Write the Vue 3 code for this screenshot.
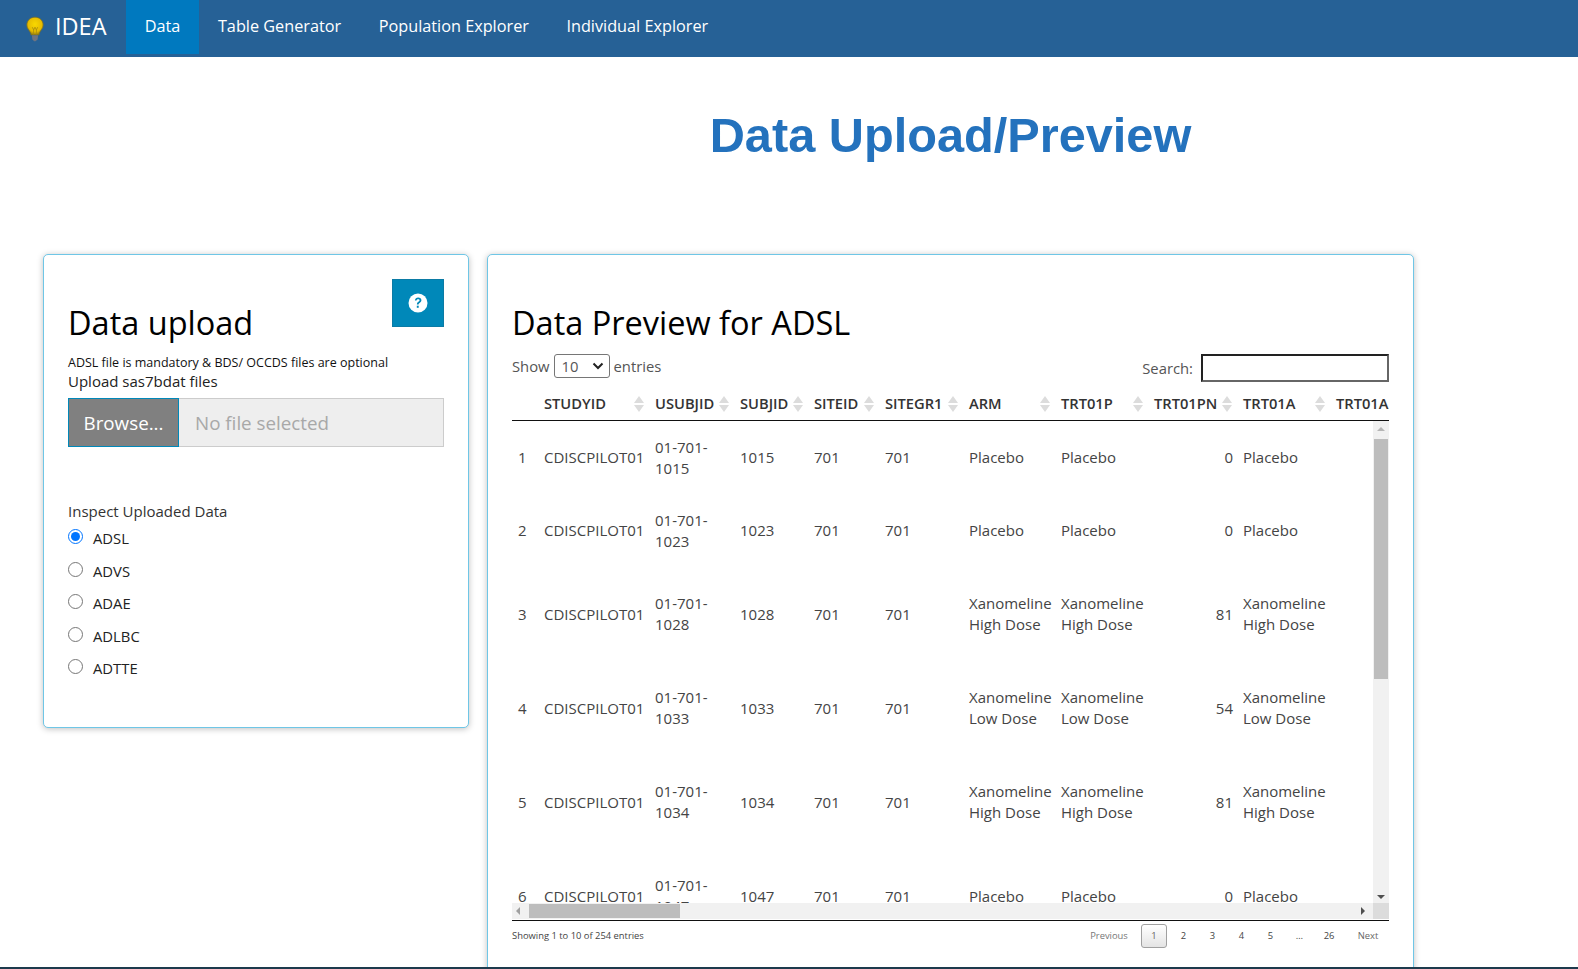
<script setup>
import { ref } from 'vue';

const navItems = ['Data', 'Table Generator', 'Population Explorer', 'Individual Explorer'];
const datasets = ['ADSL', 'ADVS', 'ADAE', 'ADLBC', 'ADTTE'];
const selected = ref('ADSL');

const columns = [
    { label: '', width: 27 },
    { label: 'STUDYID', width: 111 },
    { label: 'USUBJID', width: 85 },
    { label: 'SUBJID', width: 74 },
    { label: 'SITEID', width: 71 },
    { label: 'SITEGR1', width: 84 },
    { label: 'ARM', width: 92 },
    { label: 'TRT01P', width: 93 },
    { label: 'TRT01PN', width: 89 },
    { label: 'TRT01A', width: 93 },
    { label: 'TRT01A', width: 193 }
];

const rows = [
    { id: '1015', arm: 'Placebo', dose: 0, tall: false },
    { id: '1023', arm: 'Placebo', dose: 0, tall: false },
    { id: '1028', arm: 'Xanomeline High Dose', dose: 81, tall: true },
    { id: '1033', arm: 'Xanomeline Low Dose', dose: 54, tall: true },
    { id: '1034', arm: 'Xanomeline High Dose', dose: 81, tall: true },
    { id: '1047', arm: 'Placebo', dose: 0, tall: true }
];

const pages = ['1', '2', '3', '4', '5', '…', '26'];
</script>

<template>
<div class="page">
    <nav class="navbar">
        <div class="brand">
            <svg class="bulb" width="20" height="28" viewBox="0 0 22 30">
                <defs>
                    <radialGradient id="glow" cx="50%" cy="40%" r="60%">
                        <stop offset="0" stop-color="#f8d800" />
                        <stop offset="0.7" stop-color="#e6bc00" />
                        <stop offset="1" stop-color="#98800f" />
                    </radialGradient>
                </defs>
                <path d="M11 2C5.6 2 2 6 2 10.6c0 3.9 3 6 4 8.6.4 1 .5 1.6.6 2.3h8.8c.1-.7.2-1.3.6-2.3 1-2.6 4-4.7 4-8.6C20 6 16.4 2 11 2z" fill="url(#glow)" stroke="#7d7020" stroke-width="0.8" />
                <path d="M8 13l1.5 3 1.5-3 1.5 3 1.5-3M9.500 16v5M12.500 16v5" fill="none" stroke="#a58a10" stroke-width="0.9" />
                <path d="M7.500 22h7l-.6 4.500-2.400 2h-1.400l-2-2z" fill="#6f7480" />
            </svg>
            <span class="brand-name">IDEA</span>
        </div>
        <a v-for="item in navItems" :key="item" class="nav-link" :class="{ active: item === 'Data' }">{{ item }}</a>
    </nav>

    <main class="content">
        <div></div>
        <h1 class="title">Data Upload/Preview</h1>

        <section class="card upload-card">
            <button class="help-btn" aria-label="Help">
                <svg width="20" height="20" viewBox="0 0 20 20">
                    <circle cx="10" cy="10" r="9.500" fill="#fff" />
                    <path d="M6.900 7.600c.2-1.900 1.500-3 3.300-3 1.900 0 3.200 1.100 3.200 2.700 0 1.300-.7 2-1.700 2.600-.8.500-1.100.8-1.100 1.600H8.900c0-1.500.5-2.200 1.500-2.800.8-.5 1.200-.8 1.200-1.400 0-.6-.5-1.100-1.400-1.100-.9 0-1.500.5-1.700 1.400z" fill="#0088b9" />
                    <rect x="8.800" y="12.700" width="1.900" height="2.100" fill="#0088b9" />
                </svg>
            </button>
            <h2>Data upload</h2>
            <p class="note">ADSL file is mandatory &amp; BDS/ OCCDS files are optional</p>
            <label class="upload-label">Upload sas7bdat files</label>
            <div class="file-row">
                <span class="browse">Browse...</span>
                <span class="file-name">No file selected</span>
            </div>
            <div class="inspect-label">Inspect Uploaded Data</div>
            <label v-for="name in datasets" :key="name" class="radio-row">
                <input type="radio" name="dataset" :value="name" v-model="selected" />
                <span>{{ name }}</span>
            </label>
        </section>

        <section class="card preview-card">
            <h2>Data Preview for ADSL</h2>
            <div class="controls">
                <div class="length">
                    Show
                    <span class="select">10
                        <svg width="12" height="8" viewBox="0 0 12 8"><path d="M1.500 1.500 6 6l4.500-4.500" fill="none" stroke="#222" stroke-width="2" /></svg>
                    </span>
                    entries
                </div>
                <div class="search">Search: <span class="search-box"></span></div>
            </div>

            <div class="table-wrap">
                <table class="head-table">
                    <colgroup><col v-for="(c, i) in columns" :key="i" :style="{ width: c.width + 'px' }" /></colgroup>
                    <thead>
                        <tr>
                            <th v-for="(c, i) in columns" :key="i" :class="{ sortable: i > 0 }">{{ c.label }}</th>
                        </tr>
                    </thead>
                </table>
                <div class="body-scroll">
                    <table class="body-table">
                        <colgroup><col v-for="(c, i) in columns" :key="i" :style="{ width: c.width + 'px' }" /></colgroup>
                        <tbody>
                            <tr v-for="(r, i) in rows" :key="r.id" :class="r.tall ? 'tall' : 'short'">
                                <td class="num">{{ i + 1 }}</td>
                                <td>CDISCPILOT01</td>
                                <td>01-701-{{ r.id }}</td>
                                <td>{{ r.id }}</td>
                                <td>701</td>
                                <td>701</td>
                                <td>{{ r.arm }}</td>
                                <td>{{ r.arm }}</td>
                                <td class="num-right">{{ r.dose }}</td>
                                <td>{{ r.arm }}</td>
                                <td></td>
                            </tr>
                        </tbody>
                    </table>
                    <div class="vbar">
                        <i class="arrow up"></i>
                        <div class="vthumb"></div>
                        <i class="arrow down"></i>
                    </div>
                    <div class="hbar">
                        <i class="arrow left"></i>
                        <div class="hthumb"></div>
                        <i class="arrow right"></i>
                        <div class="corner"></div>
                    </div>
                </div>
            </div>

            <div class="footer">
                <div class="info">Showing 1 to 10 of 254 entries</div>
                <div class="pager">
                    <span class="page-btn muted">Previous</span>
                    <span v-for="p in pages" :key="p" class="page-btn" :class="{ current: p === '1', wide: p === '26' }">{{ p }}</span>
                    <span class="page-btn next">Next</span>
                </div>
            </div>
        </section>
    </main>
    <div class="bottom-edge"></div>
</div>
</template>

<style>
html, body {
    margin: 0;
    height: 100%;
    overflow: hidden;
    background: #fff;
}
</style>

<style scoped>
.page {
    height: 969px;
    overflow: hidden;
    position: relative;
    font-family: "Open Sans", sans-serif;
    font-size: 14px;
    color: #333;
}

.navbar {
    display: flex;
    height: 57px;
    background: #266196;
    color: #fff;
}

.brand {
    display: flex;
    align-items: center;
    width: 126px;
    height: 52px;
    padding-left: 25px;
    box-sizing: border-box;
}

.bulb {
    margin-top: 5px;
}

.brand-name {
    font-size: 23.5px;
    margin-left: 10px;
}

.nav-link {
    height: 54px;
    box-sizing: border-box;
    padding: 0 18.75px 2px;
    display: flex;
    align-items: center;
    font-size: 16.25px;
}

.nav-link.active {
    background: #0079bf;
}

.content {
    display: grid;
    grid-template-columns: 426px 927px;
    column-gap: 18px;
    align-items: start;
    padding-left: 43px;
}

.title {
    margin: 50px 0 0;
    height: 147px;
    text-align: center;
    font-family: "Liberation Sans", Arial, sans-serif;
    font-size: 48.7px;
    line-height: 56px;
    font-weight: 700;
    color: #2472bd;
}

.card {
    position: relative;
    box-sizing: border-box;
    background: #fff;
    border: 1px solid #6fc6e6;
    border-radius: 5px;
    box-shadow: 0 1px 6px rgba(0, 0, 0, 0.25);
    padding: 0 24px;
    color: #222;
}

.card h2 {
    margin: 0;
    font-weight: 400;
    font-size: 32.5px;
    line-height: 44px;
    color: #000;
}

.upload-card {
    height: 474px;
    padding-top: 46px;
}

.preview-card {
    height: 760px;
    padding-top: 46px;
}

.help-btn {
    position: absolute;
    top: 24px;
    right: 24px;
    width: 52px;
    height: 48px;
    padding: 0;
    display: flex;
    align-items: center;
    justify-content: center;
    background: #0088b9;
    border: 1px solid #0b7ba5;
}

.note {
    margin: 9px 0 0;
    font-size: 12.5px;
    line-height: 18px;
    color: #111;
}

.upload-label {
    display: block;
    font-size: 15px;
    line-height: 18px;
    color: #222;
}

.file-row {
    display: flex;
    height: 49px;
    margin-top: 8px;
    font-size: 18.8px;
}

.browse {
    box-sizing: border-box;
    width: 111px;
    display: flex;
    align-items: center;
    justify-content: center;
    background: #808080;
    color: #fff;
    border: 1px solid #0088b9;
}

.file-name {
    flex: 1;
    box-sizing: border-box;
    display: flex;
    align-items: center;
    padding-left: 16px;
    background: #eee;
    color: #a8a8a8;
    border: 1px solid #ccc;
    border-left: 0;
}

.inspect-label {
    margin-top: 54px;
    font-size: 15px;
    line-height: 20px;
    color: #333;
}

.radio-row {
    display: flex;
    align-items: flex-start;
    height: 32.5px;
    font-size: 14.8px;
    color: #222;
}

.inspect-label + .radio-row {
    margin-top: 8px;
}

.radio-row input {
    width: 15px;
    height: 15px;
    margin: 0 10px 0 0;
    accent-color: #0075ff;
}

.radio-row span {
    line-height: 18px;
}

.controls {
    display: flex;
    justify-content: space-between;
    align-items: flex-start;
    height: 32px;
    margin-top: 9px;
    color: #555;
    font-size: 14.8px;
}

.length {
    display: flex;
    align-items: center;
    gap: 4px;
    height: 24px;
}

.select {
    box-sizing: border-box;
    width: 56px;
    height: 24px;
    display: flex;
    align-items: center;
    justify-content: space-between;
    padding: 0 5px 0 7px;
    border: 1px solid #767676;
    border-radius: 3px;
    color: #555;
}

.search {
    display: flex;
    align-items: center;
    gap: 8px;
    height: 28px;
}

.search-box {
    box-sizing: border-box;
    width: 188px;
    height: 28px;
    border: 2px solid;
    border-color: #222 #666 #666 #222;
}

.table-wrap {
    width: 877px;
    border-bottom: 1.5px solid #111;
    overflow: hidden;
}

table {
    border-collapse: collapse;
    table-layout: fixed;
    width: 1012px;
}

.head-table {
    border-bottom: 1.5px solid #111;
}

th {
    height: 34px;
    padding: 0 5px;
    position: relative;
    text-align: left;
    font-size: 14.7px;
    font-weight: 600;
    white-space: nowrap;
    color: #333;
}

th.sortable::before,
th.sortable::after {
    content: '';
    position: absolute;
    right: 6px;
    border-left: 5px solid transparent;
    border-right: 5px solid transparent;
}

th.sortable::before {
    top: 10px;
    border-bottom: 7px solid #dcdcdc;
}

th.sortable::after {
    top: 19px;
    border-top: 7px solid #dcdcdc;
}

.body-scroll {
    position: relative;
    height: 499px;
    overflow: hidden;
}

td {
    padding: 0 5px;
    font-size: 15px;
    line-height: 21px;
    color: #444;
    vertical-align: middle;
}

tr.short td {
    height: 73px;
}

tr.tall td {
    height: 94px;
}

.num-right {
    text-align: right;
}

td.num {
    padding-left: 6px;
}

.vbar {
    position: absolute;
    top: 0;
    right: 0;
    width: 16px;
    height: 482px;
    background: #f1f1f1;
}

.vthumb {
    position: absolute;
    top: 18px;
    left: 1px;
    width: 14px;
    height: 240px;
    background: #bdbdbd;
}

.hbar {
    position: absolute;
    left: 0;
    right: 0;
    top: 482px;
    height: 16px;
    background: #f1f1f1;
}

.hthumb {
    position: absolute;
    left: 17px;
    top: 1px;
    width: 151px;
    height: 14px;
    background: #bdbdbd;
}

.corner {
    position: absolute;
    right: 0;
    top: 0;
    width: 16px;
    height: 16px;
    background: #dcdcdc;
}

.arrow {
    position: absolute;
    width: 0;
    height: 0;
    border: 4px solid transparent;
}

.arrow.up {
    top: 2px;
    left: 4px;
    border-bottom-color: #b5b5b5;
}

.arrow.down {
    bottom: 0;
    left: 4px;
    border-top-color: #505050;
}

.arrow.left {
    left: 0;
    top: 4px;
    border-right-color: #a0a0a0;
}

.arrow.right {
    right: 20px;
    top: 4px;
    border-left-color: #505050;
}

.footer {
    display: flex;
    justify-content: space-between;
    align-items: center;
    height: 25px;
    margin-top: 2px;
    font-size: 9.4px;
    color: #444;
}

.pager {
    display: flex;
    align-items: center;
    padding-right: 6px;
    color: #444;
}

.page-btn {
    box-sizing: border-box;
    min-width: 29px;
    height: 24px;
    display: flex;
    align-items: center;
    justify-content: center;
}

.page-btn.muted {
    min-width: 50px;
    margin-right: 7px;
    color: #777;
}

.page-btn.current {
    width: 26px;
    min-width: 26px;
    margin-right: 2px;
    border: 1px solid #a0a0a0;
    border-radius: 3px;
    background: linear-gradient(#fff, #e4e4e4);
    color: #666;
}

.page-btn.wide {
    min-width: 30px;
}

.page-btn.next {
    min-width: 30px;
    margin-left: 9px;
    color: #666;
}

.bottom-edge {
    position: absolute;
    left: 0;
    right: 0;
    bottom: 0;
    height: 2px;
    background: #1d3a4c;
}
</style>
